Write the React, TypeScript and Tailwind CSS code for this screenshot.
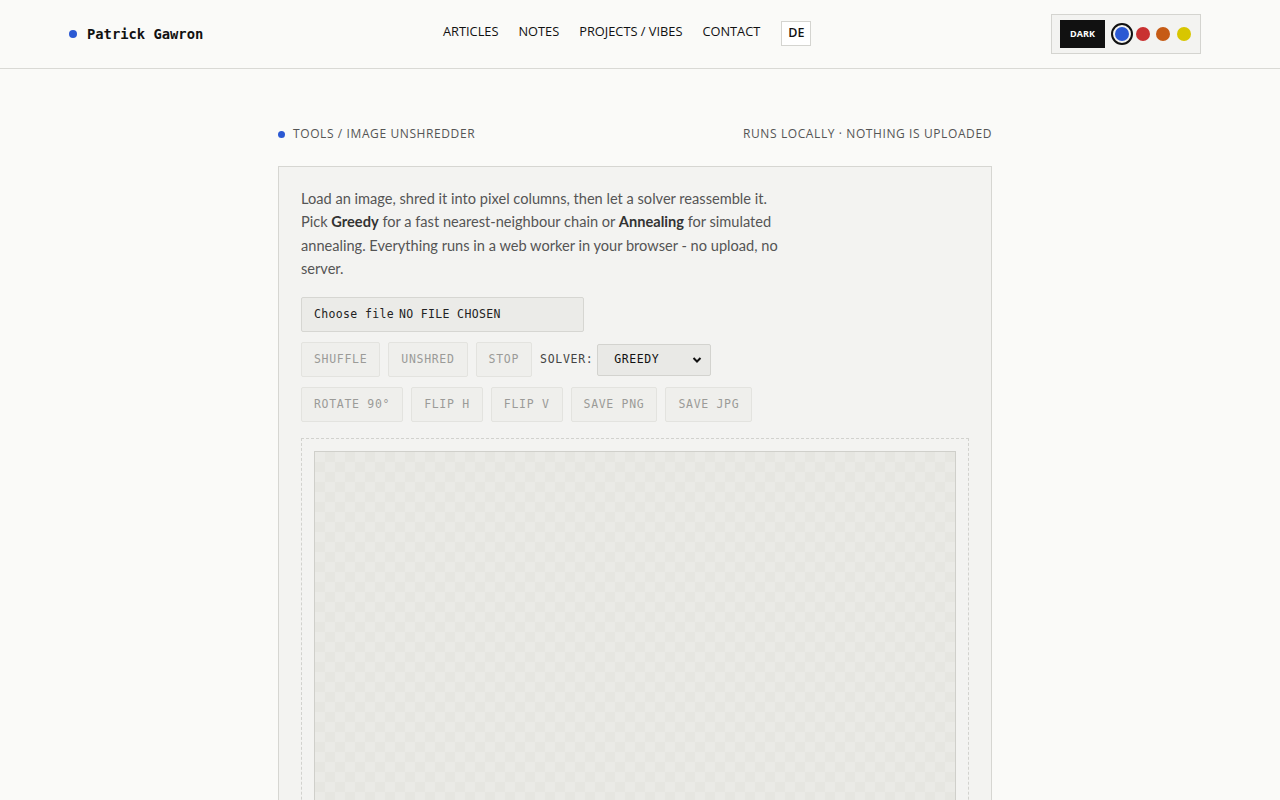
import React from "react";

const mono = "font-['DejaVu_Sans_Mono','Liberation_Mono',monospace]";
const sans = "font-['Open_Sans','Noto_Sans',sans-serif]";

function Btn({ children }: { children: React.ReactNode }) {
  return (
    <button
      className={`${mono} h-[35px] px-[12px] text-[11.5px] tracking-[0.06em] text-[#9b9b98] bg-[#efefec] border border-[#e3e3df] rounded-[2px]`}
    >
      {children}
    </button>
  );
}

export default function App() {
  return (
    <div className={`min-h-screen bg-[#fafaf8] ${sans}`}>
      <header className="h-[69px] border-b border-[#d9d9d5] flex items-center justify-between pl-[69px] pr-[79px]">
        <div className="flex items-center gap-[10px]">
          <span className="w-[8px] h-[8px] rounded-full bg-[#2b59d3]" />
          <span className={`${mono} font-bold text-[13.8px] text-[#111]`}>Patrick Gawron</span>
        </div>
        <nav className="flex items-center gap-[20px] text-[12.8px] font-medium text-[#111] -mt-[5px]">
          <a>ARTICLES</a>
          <a>NOTES</a>
          <a>PROJECTS / VIBES</a>
          <a>CONTACT</a>
          <span className="ml-[1px] mt-[4px] w-[30px] h-[25px] border border-[#d4d4d0] flex items-center justify-center text-[12.5px] font-semibold bg-white">
            DE
          </span>
        </nav>
        <div className="w-[150px] h-[40px] border border-[#d4d4d0] bg-[#f3f3f1] flex items-center pl-[8px]">
          <span className="w-[45px] h-[28px] bg-[#111] text-white text-[9px] font-bold flex items-center justify-center">DARK</span>
          <span className="ml-[6px] w-[22px] h-[22px] rounded-full border-[2px] border-[#111] flex items-center justify-center">
            <span className="w-[14px] h-[14px] rounded-full bg-[#2b59d3]" />
          </span>
          <span className="ml-[3px] w-[14px] h-[14px] rounded-full bg-[#c93131]" />
          <span className="ml-[6px] w-[14px] h-[14px] rounded-full bg-[#c65b15]" />
          <span className="ml-[7px] w-[14px] h-[14px] rounded-full bg-[#d8c600]" />
        </div>
      </header>

      <div className="pr-[10px]">
        <main className="w-[714px] mx-auto pt-[57px]">
          <div className="flex items-center justify-between h-[16px] text-[12px] tracking-[0.05em] text-[#555]">
            <div className="flex items-center gap-[8px]">
              <span className="w-[7px] h-[7px] rounded-full bg-[#2b59d3]" />
              <span>TOOLS / IMAGE UNSHREDDER</span>
            </div>
            <span>RUNS LOCALLY · NOTHING IS UPLOADED</span>
          </div>

          <section className="mt-[24px] bg-[#f3f3f1] border border-[#d6d6d2] px-[22px] pt-[20px] pb-[0px]">
            <p className="max-w-[490px] text-[14.6px] leading-[23.3px] text-[#555] font-['Lato','Open_Sans',sans-serif]">
              Load an image, shred it into pixel columns, then let a solver reassemble it. Pick{" "}
              <b className="text-[#333]">Greedy</b> for a fast nearest-neighbour chain or{" "}
              <b className="text-[#333]">Annealing</b> for simulated annealing. Everything runs in a web worker in your
              browser - no upload, no server.
            </p>

            <div className={`${mono} mt-[17px] w-[283px] h-[35px] border border-[#d6d6d2] bg-[#ebebe8] rounded-[2px] flex items-center pl-[12px] gap-[5px] text-[11.5px] text-[#222] tracking-[0.03em]`}>
              <span>Choose file</span>
              <span>NO FILE CHOSEN</span>
            </div>

            <div className="mt-[10px] flex items-center gap-[8px]">
              <Btn>SHUFFLE</Btn>
              <Btn>UNSHRED</Btn>
              <Btn>STOP</Btn>
              <span className={`${mono} text-[11.5px] tracking-[0.06em] text-[#444]`}>SOLVER:</span>
              <div className="relative -ml-[4px]">
                <select
                  className={`${mono} appearance-none w-[114px] h-[32px] pl-[16px] bg-[#e9e9e6] border border-[#d3d3cf] rounded-[2px] text-[11.5px] font-medium tracking-[0.05em] text-[#111] outline-none`}
                  defaultValue="GREEDY"
                >
                  <option>GREEDY</option>
                  <option>ANNEALING</option>
                </select>
                <svg
                  className="absolute right-[9px] top-[12px] pointer-events-none"
                  width="10"
                  height="8"
                  viewBox="0 0 10 8"
                >
                  <path d="M1.5 2 L5 5.5 L8.5 2" fill="none" stroke="#111" strokeWidth="2" />
                </svg>
              </div>
            </div>

            <div className="mt-[10px] flex items-center gap-[8px]">
              <Btn>ROTATE 90°</Btn>
              <Btn>FLIP H</Btn>
              <Btn>FLIP V</Btn>
              <Btn>SAVE PNG</Btn>
              <Btn>SAVE JPG</Btn>
            </div>

            <div className="mt-[16px] border border-dashed border-[#d2d2ce] p-[12px]">
              <div className="h-[520px] border border-[#cfcfca] bg-[#e8e8e4] bg-[image:repeating-conic-gradient(#e6e6e1_0_25%,#eaeae6_0_50%)] bg-[length:20px_20px]" />
            </div>
            <div className="h-[24px]" />
          </section>
        </main>
      </div>
    </div>
  );
}
